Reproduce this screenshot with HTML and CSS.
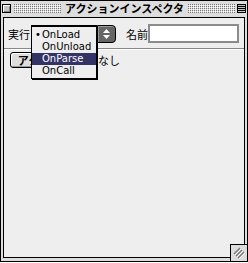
FILE: index.html
```html
<!DOCTYPE html>
<html lang="ja">
<head>
<meta charset="utf-8">
<title>アクションインスペクタ</title>
<link rel="stylesheet" href="styles.css">
</head>
<body>
<div class="window">
  <div class="titlebar">
    <div class="close-box"></div>
    <div class="stripes"></div>
    <div class="title">アクションインスペクタ</div>
    <div class="stripes"></div>
    <div class="collapse-box"></div>
  </div>
  <div class="frame">
    <div class="content">
      <div class="row row-top">
        <span class="label">実行</span>
        <div class="popup">
          <div class="popup-field"></div>
          <div class="popup-arrow">
            <svg width="7" height="10" viewBox="0 0 7 10"><path d="M3.5 0 L7 4 H0 Z M0 6 H7 L3.5 10 Z" fill="#fff"/></svg>
          </div>
          <ul class="menu">
            <li class="menu-item checked">OnLoad</li>
            <li class="menu-item">OnUnload</li>
            <li class="menu-item selected">OnParse</li>
            <li class="menu-item">OnCall</li>
          </ul>
        </div>
        <span class="label name-label">名前</span>
        <div class="textfield"></div>
      </div>
      <div class="separator"></div>
      <div class="row row-action">
        <button class="btn">アクション</button>
        <span class="value">なし</span>
      </div>
    </div>
    <div class="grow-box">
      <svg width="12" height="12" viewBox="0 0 12 12">
        <path d="M1 7 L7 1 M3 9 L9 3 M5 11 L11 5" stroke="#777" stroke-width="1.4" fill="none"/>
        <path d="M2 8 L8 2 M4 10 L10 4 M6 12 L12 6" stroke="#fff" stroke-width="1" fill="none"/>
      </svg>
    </div>
  </div>
</div>
</body>
</html>
```
FILE: styles.css
```css
* { box-sizing: border-box; margin: 0; padding: 0; }
html, body { width: 248px; height: 263px; background: #fff; overflow: hidden; }
body { font-family: "Noto Sans CJK JP", sans-serif; font-size: 11px; color: #000; }

.window {
  width: 248px;
  height: 262px;
  border: 1px solid #000;
  background: #dddddd;
  display: flex;
  flex-direction: column;
}

.titlebar {
  height: 15px;
  display: flex;
  align-items: center;
  background: #dddddd;
}
.close-box {
  width: 9px;
  height: 9px;
  margin-left: 1px;
  border: 1px solid #000;
  background: #c4c4c4;
  box-shadow: inset 1px 1px #fff, inset -1px -1px #888;
}
.stripes {
  flex: 1;
  height: 9px;
  margin: 0 4px 0 3px;
  background:
    conic-gradient(at 1px 1px, transparent 75%, #7a7a7a 0) 0 0 / 2px 2px,
    conic-gradient(at 1px 1px, transparent 25%, #fff 0 50%, transparent 0) 0 0 / 2px 2px;
}
.stripes + .title + .stripes { margin: 0 2px 0 4px; }
.title {
  font-weight: bold;
  font-size: 11px;
  line-height: 15px;
  white-space: nowrap;
}
.collapse-box {
  width: 9px;
  height: 9px;
  margin-right: 1px;
  border: 1px solid #000;
  background:
    repeating-linear-gradient(180deg, #c4c4c4 0 1px, #000 1px 2px) 0 0 / 100% 100%;
}

.frame {
  flex: 1;
  position: relative;
  padding: 1px 3px 3px 2px;
  display: flex;
  background: #dddddd;
}
.content {
  flex: 1;
  border: 1px solid #000;
  background: #eeeeee;
  display: flex;
  flex-direction: column;
}

.row { display: flex; align-items: center; }
.row-top {
  margin-top: 6px;
  height: 19px;
  padding: 0 5px 0 4px;
}
.label { line-height: 14px; white-space: nowrap; }
.popup {
  position: relative;
  display: flex;
  height: 18px;
  margin-left: 1px;
}
.popup-field {
  width: 66px;
  border: 1px solid #000;
  border-right: none;
  background: #fff;
}
.popup-arrow {
  width: 19px;
  border: 1px solid #000;
  border-radius: 0 4px 4px 0;
  background: #666;
  box-shadow: inset 1px 1px #999;
  display: flex;
  align-items: center;
  justify-content: center;
}
.menu {
  position: absolute;
  left: 0;
  top: 1px;
  width: 66px;
  z-index: 2;
  list-style: none;
  background: #eeeeee;
  border: 1px solid #000;
  box-shadow: 1px 1px 0 #000;
  padding: 2px 0 1px;
}
.menu-item {
  position: relative;
  height: 12px;
  line-height: 12px;
  padding-left: 10px;
  font-family: "DejaVu Sans", sans-serif;
  font-size: 10px;
  white-space: nowrap;
}
.menu-item.checked::before {
  content: "•";
  position: absolute;
  left: 3px;
  top: 0;
}
.menu-item.selected { background: #333366; color: #fff; }

.name-label { margin-left: 10px; }
.textfield {
  margin-left: auto;
  width: 91px;
  height: 19px;
  background: #fff;
  border: 2px solid #8c8c8c;
}

.separator {
  margin-top: 5px;
  height: 2px;
  border-top: 1px solid #888;
  border-bottom: 1px solid #fff;
}

.row-action {
  margin-top: 2px;
  padding-left: 6px;
}
.btn {
  width: 70px;
  height: 16px;
  border: 1px solid #000;
  border-radius: 3px;
  background: #dddddd;
  box-shadow: inset 1px 1px #fff, inset -1px -1px #999;
  font-family: "Noto Sans CJK JP", sans-serif;
  font-weight: bold;
  font-size: 11px;
  line-height: 13px;
  color: #000;
}
.value { margin-left: 18px; line-height: 14px; }

.grow-box {
  position: absolute;
  right: 0;
  bottom: 0;
  width: 17px;
  height: 17px;
  border-top: 1px solid #000;
  border-left: 1px solid #000;
  background: #dddddd;
  display: flex;
  align-items: center;
  justify-content: center;
}
```
